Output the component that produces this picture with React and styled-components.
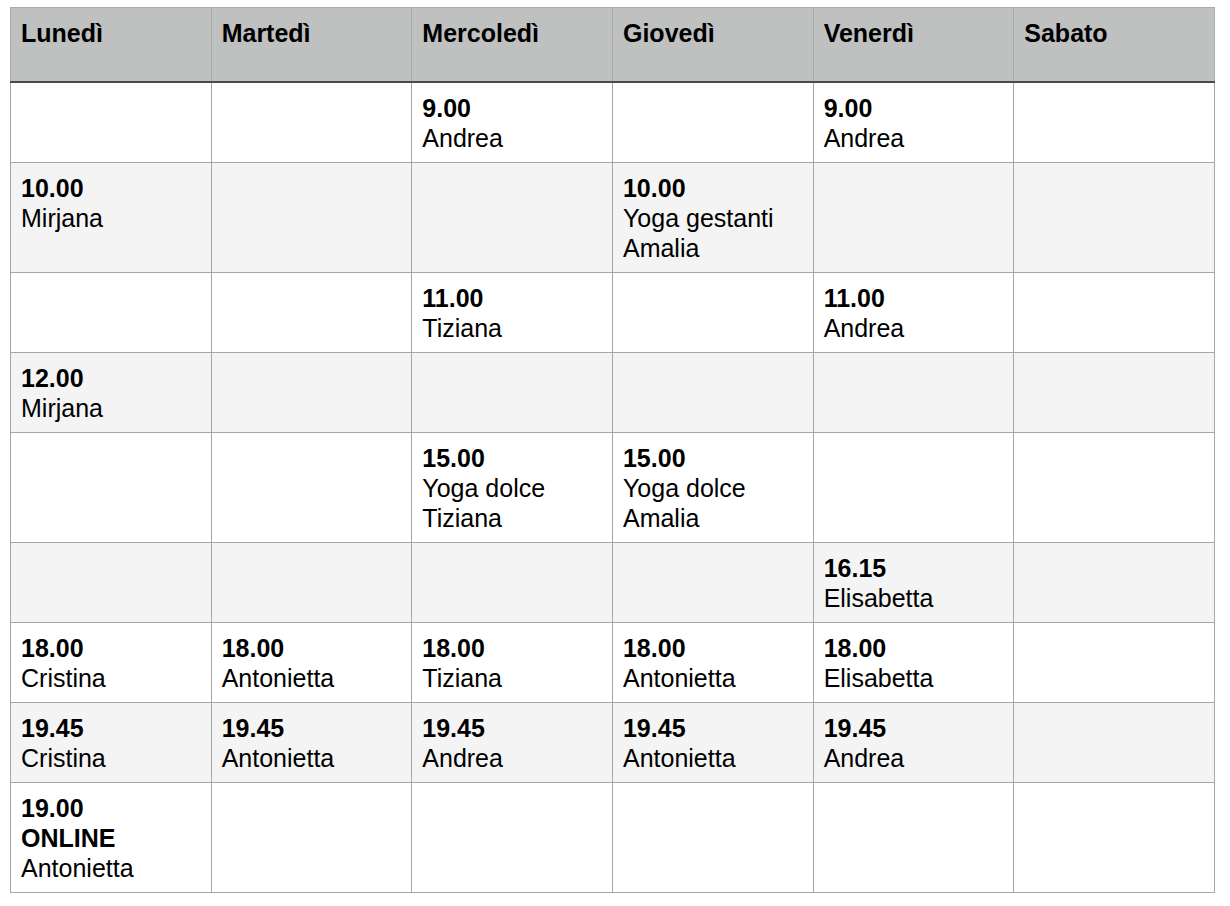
import React from "react";
import styled, { createGlobalStyle } from "styled-components";

const Global = createGlobalStyle`
  html, body { margin: 0; padding: 0; background: #fff; }
  body { font-family: "Liberation Sans", Arial, Helvetica, sans-serif; color: #000; }
`;

const Page = styled.div`
  padding: 7px 0 0 10px;
`;

const Table = styled.table`
  border-collapse: collapse;
  table-layout: fixed;
  width: 1205px;
  font-size: 25px;
  line-height: 30px;
`;

const HeadCell = styled.th`
  background: #bfc1c0;
  border: 1px solid #a9abaa;
  border-bottom: 2px solid #4a4a4a;
  text-align: left;
  vertical-align: top;
  font-weight: bold;
  padding: 10px 10px 0;
  height: 74px;
  box-sizing: border-box;
`;

const Row = styled.tr`
  background: ${(p) => (p.$shade ? "#f4f4f4" : "#ffffff")};
`;

const Cell = styled.td`
  border: 1px solid #a6a6a6;
  vertical-align: top;
  padding: 10px 10px 9px;
  height: 60px;
`;

const Time = styled.div`
  font-weight: bold;
`;

const Line = styled.div`
  font-weight: ${(p) => (p.$bold ? "bold" : "normal")};
`;

const days = ["Lunedì", "Martedì", "Mercoledì", "Giovedì", "Venerdì", "Sabato"];

const rows = [
  [null, null, ["9.00", "Andrea"], null, ["9.00", "Andrea"], null],
  [["10.00", "Mirjana"], null, null, ["10.00", "Yoga gestanti", "Amalia"], null, null],
  [null, null, ["11.00", "Tiziana"], null, ["11.00", "Andrea"], null],
  [["12.00", "Mirjana"], null, null, null, null, null],
  [null, null, ["15.00", "Yoga dolce", "Tiziana"], ["15.00", "Yoga dolce", "Amalia"], null, null],
  [null, null, null, null, ["16.15", "Elisabetta"], null],
  [["18.00", "Cristina"], ["18.00", "Antonietta"], ["18.00", "Tiziana"], ["18.00", "Antonietta"], ["18.00", "Elisabetta"], null],
  [["19.45", "Cristina"], ["19.45", "Antonietta"], ["19.45", "Andrea"], ["19.45", "Antonietta"], ["19.45", "Andrea"], null],
  [["19.00", { text: "ONLINE", bold: true }, "Antonietta"], null, null, null, null, null],
];

export default function App() {
  return (
    <Page>
      <Global />
      <Table>
        <thead>
          <tr>
            {days.map((d) => (
              <HeadCell key={d}>{d}</HeadCell>
            ))}
          </tr>
        </thead>
        <tbody>
          {rows.map((r, i) => (
            <Row key={i} $shade={i % 2 === 1}>
              {r.map((c, j) => (
                <Cell key={j}>
                  {c && (
                    <>
                      <Time>{c[0]}</Time>
                      {c.slice(1).map((l, k) =>
                        typeof l === "string" ? (
                          <Line key={k}>{l}</Line>
                        ) : (
                          <Line key={k} $bold={l.bold}>{l.text}</Line>
                        )
                      )}
                    </>
                  )}
                </Cell>
              ))}
            </Row>
          ))}
        </tbody>
      </Table>
    </Page>
  );
}
